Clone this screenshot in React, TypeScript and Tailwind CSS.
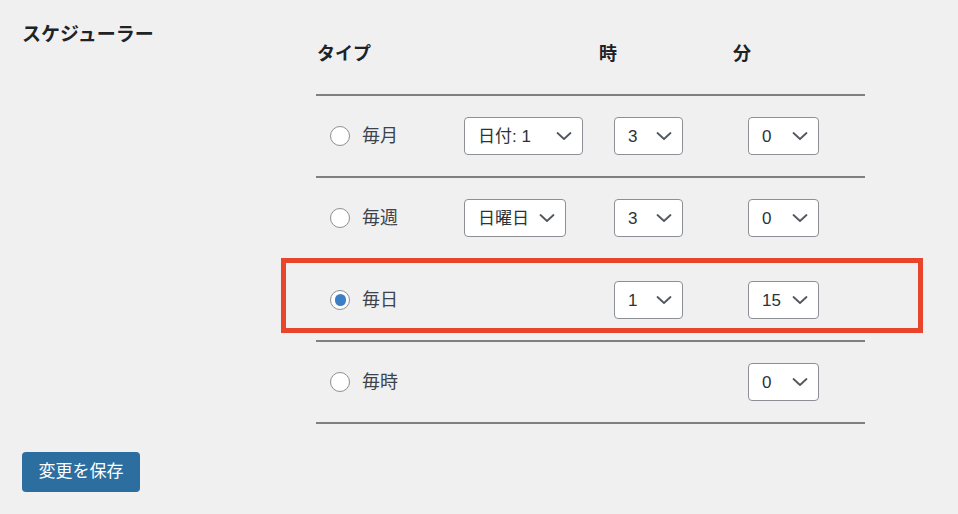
import React from 'react';

const Chevron: React.FC = () => (
  <svg width="16" height="10" viewBox="0 0 16 10" className="shrink-0">
    <polyline points="1.5,2 8,8 14.5,2" fill="none" stroke="#50575e" strokeWidth="1.8" strokeLinecap="round" strokeLinejoin="round" />
  </svg>
);

const Select: React.FC<{ value: string; width: string }> = ({ value, width }) => (
  <div
    className={`${width} h-[38px] flex items-center justify-between pl-[13px] pr-[10px] bg-white border-[1.5px] border-[#8c8f94] rounded-[4px] text-[17px] text-[#2c3338]`}
  >
    <span className="leading-none">{value}</span>
    <Chevron />
  </div>
);

const Radio: React.FC<{ checked?: boolean; label: string }> = ({ checked, label }) => (
  <div className="flex items-center gap-[12px] pl-[14px]">
    <div className="w-[20px] h-[20px] rounded-full bg-white border-[1.5px] border-[#8c8f94] flex items-center justify-center">
      {checked && <div className="w-[11px] h-[12px] rounded-full bg-[#3d7fc4]" />}
    </div>
    <span className="text-[18px] text-[#3c434a]">{label}</span>
  </div>
);

type Row = {
  label: string;
  checked?: boolean;
  first?: { value: string; width: string };
  hour?: string;
  minute: string;
};

const rows: Row[] = [
  { label: '毎月', first: { value: '日付: 1', width: 'w-[119px]' }, hour: '3', minute: '0' },
  { label: '毎週', first: { value: '日曜日', width: 'w-[102px]' }, hour: '3', minute: '0' },
  { label: '毎日', checked: true, hour: '1', minute: '15' },
  { label: '毎時', minute: '0' },
];

const App: React.FC = () => {
  return (
    <div
      className="relative w-full h-[514px] bg-[#f0f0f1] flex flex-col"
      style={{ fontFamily: '"Liberation Sans", "Noto Sans CJK JP", sans-serif' }}
    >
      <div className="flex">
        {/* Label column */}
        <div className="w-[316px] shrink-0 pl-[22px] pt-[21px]">
          <h2 className="text-[19px] leading-[28px] font-bold text-[#1d2327]">スケジューラー</h2>
        </div>

        {/* Schedule table */}
        <div className="w-[549px]">
          <div className="h-[94px] pt-[40px] grid grid-cols-[148px_150px_134px_1fr] text-[18px] leading-[28px] font-bold text-[#1d2327]">
            <div className="pl-[1px]">タイプ</div>
            <div></div>
            <div className="-ml-[15px]">時</div>
            <div className="-ml-[15px]">分</div>
          </div>
          <div className="border-t-2 border-[#808080]">
            {rows.map((row) => (
              <div
                key={row.label}
                className="h-[82px] border-b-2 border-[#808080] grid grid-cols-[148px_150px_134px_1fr] items-center"
              >
                <Radio label={row.label} checked={row.checked} />
                <div>{row.first && <Select value={row.first.value} width={row.first.width} />}</div>
                <div>{row.hour && <Select value={row.hour} width="w-[69px]" />}</div>
                <div>
                  <Select value={row.minute} width="w-[71px]" />
                </div>
              </div>
            ))}
          </div>
        </div>
      </div>

      <div className="pl-[22px] mt-[28px]">
        <button className="w-[118px] h-[40px] rounded-[4px] bg-[#2b6e9f] text-white text-[17px]">
          変更を保存
        </button>
      </div>

      {/* Highlight annotation */}
      <div className="absolute left-[281px] top-[258px] w-[642px] h-[75px] border-[5px] border-[#e9442c] pointer-events-none" />
    </div>
  );
};

export default App;
